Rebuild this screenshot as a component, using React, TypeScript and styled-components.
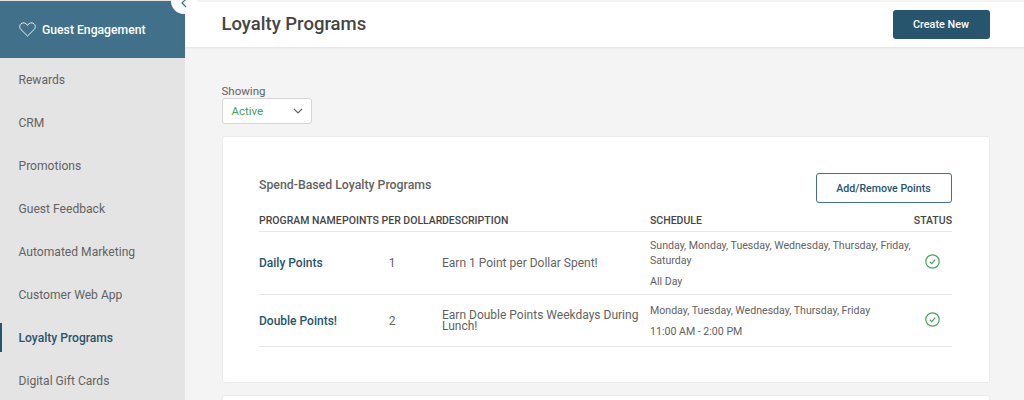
import { FunctionComponent } from "react";
import styled, { createGlobalStyle } from "styled-components";

const colors = {
  teal: "#41718a",
  navy: "#26556d",
  text: "#636363",
  dark: "#454545",
  green: "#4ba35f",
  line: "#e8e8e8",
};

const fontStack = `"Roboto", "Liberation Sans", sans-serif`;

const GlobalStyle = createGlobalStyle`
  html, body {
    margin: 0;
    height: 100%;
    overflow: hidden;
    background: #f4f4f4;
    font-family: ${fontStack};
    color: ${colors.text};
  }
  #root { height: 100%; }
`;

const Page = styled.div`
  position: relative;
  display: flex;
  width: 1024px;
  height: 400px;
  overflow: hidden;
`;

const Sidebar = styled.nav`
  flex: 0 0 185px;
  background: #e4e4e4;
  padding-top: 1px;
`;

const SideHeader = styled.div`
  display: flex;
  align-items: center;
  gap: 6px;
  height: 57px;
  padding-left: 19px;
  background: ${colors.teal};
  color: #fff;
  font-size: 12.2px;
  font-weight: 500;
`;

const SideItem = styled.div<{ $active?: boolean }>`
  position: relative;
  display: flex;
  align-items: center;
  height: 43px;
  padding-left: 18.5px;
  font-size: 12.1px;
  font-weight: ${({ $active }) => ($active ? 500 : 400)};
  color: ${({ $active }) => ($active ? colors.navy : colors.text)};

  &::before {
    content: "";
    display: ${({ $active }) => ($active ? "block" : "none")};
    position: absolute;
    left: 0;
    top: 7px;
    width: 2px;
    height: 29px;
    background: ${colors.navy};
  }
`;

const Collapse = styled.div`
  position: absolute;
  left: 171px;
  top: -12px;
  width: 26px;
  height: 26px;
  border-radius: 50%;
  background: #fff;
  display: flex;
  align-items: center;
  justify-content: center;
  padding-top: 4px;
  box-sizing: border-box;
`;

const Main = styled.main`
  flex: 1;
  min-width: 0;
`;

const TopBar = styled.header`
  display: flex;
  align-items: center;
  justify-content: space-between;
  box-sizing: border-box;
  height: 45px;
  margin-top: 2px;
  padding: 0 34.5px 0 36.5px;
  background: #fff;
  box-shadow: 0 1px 2px rgba(0, 0, 0, 0.08);
`;

const PageTitle = styled.h1`
  margin: 0 0 2px;
  font-size: 18.5px;
  font-weight: 500;
  color: ${colors.dark};
`;

const PrimaryButton = styled.button`
  width: 97px;
  height: 29px;
  border: 0;
  border-radius: 3px;
  background: ${colors.navy};
  color: #fff;
  font: 500 10.8px ${fontStack};
`;

const Content = styled.div`
  padding: 38px 34.5px 0 36.5px;
`;

const FieldLabel = styled.label`
  display: block;
  font-size: 11.5px;
  line-height: 13px;
  color: ${colors.text};
`;

const SelectBox = styled.div`
  display: flex;
  align-items: center;
  justify-content: space-between;
  box-sizing: border-box;
  width: 90px;
  height: 26px;
  padding: 0 8px 0 9px;
  background: #fff;
  border: 1px solid #d6d6d6;
  border-radius: 3px;
  font-size: 11.5px;
  color: ${colors.green};
`;

const Card = styled.section`
  box-sizing: border-box;
  margin-top: 12px;
  height: 247px;
  padding: 36px 37px 0 36.5px;
  background: #fff;
  border: 1px solid #ececec;
  border-radius: 3px;
`;

const CardHead = styled.div`
  display: flex;
  align-items: flex-start;
  justify-content: space-between;
  height: 36px;
`;

const CardTitle = styled.h2`
  margin: 5px 0 0;
  font-size: 12.3px;
  font-weight: 500;
  color: ${colors.text};
`;

const OutlineButton = styled.button`
  width: 136px;
  height: 30px;
  background: #fff;
  border: 1px solid ${colors.teal};
  border-radius: 3px;
  color: ${colors.navy};
  font: 500 10.6px ${fontStack};
`;

const Table = styled.table`
  width: 693px;
  table-layout: fixed;
  border-collapse: collapse;
`;

const Th = styled.th<{ $align?: string }>`
  height: 22px;
  padding: 0;
  font-size: 10.5px;
  font-weight: 500;
  white-space: nowrap;
  color: ${colors.dark};
  text-align: ${({ $align }) => $align || "left"};
  border-bottom: 1px solid ${colors.line};
`;

const Row = styled.tr<{ $height: number }>`
  height: ${({ $height }) => $height}px;
`;

const Td = styled.td<{ $align?: string }>`
  padding: 0;
  font-size: 12px;
  color: ${colors.text};
  text-align: ${({ $align }) => $align || "left"};
  border-bottom: 1px solid ${colors.line};
`;

const ProgramName = styled.a`
  font-size: 12px;
  font-weight: 500;
  white-space: nowrap;
  color: ${colors.navy};
`;

const Description = styled.div`
  line-height: 11px;
  font-size: 12px;
`;

const Days = styled.div`
  font-size: 10.6px;
  line-height: 15px;
`;

const Hours = styled.div`
  margin-top: 6px;
  font-size: 10.6px;
  line-height: 15px;
`;

const Heart: FunctionComponent = () => (
  <svg width="17" height="15" viewBox="0 0 17 15" fill="none" stroke="#fff" strokeWidth="0.9">
    <path d="M8.5 14 L1.8 7.4 C-0.2 5.2 0.6 1.2 4.2 0.9 C6 0.8 7.6 1.8 8.5 3.4 C9.4 1.8 11 0.8 12.8 0.9 C16.4 1.2 17.2 5.2 15.2 7.4 Z" />
  </svg>
);

const Chevron: FunctionComponent<{ color: string; width: number; height: number; points: string }> = ({ color, width, height, points }) => (
  <svg width={width} height={height} viewBox={`0 0 ${width} ${height}`} fill="none" stroke={color} strokeWidth="1.2">
    <polyline points={points} />
  </svg>
);

const StatusCheck: FunctionComponent = () => (
  <svg width="15" height="15" viewBox="0 0 15 15" fill="none" stroke={colors.green} strokeWidth="1.2">
    <circle cx="7.5" cy="7.5" r="6.7" />
    <polyline points="4.8,7.8 6.8,9.6 10.2,5.6" />
  </svg>
);

const navItems = [
  "Rewards",
  "CRM",
  "Promotions",
  "Guest Feedback",
  "Automated Marketing",
  "Customer Web App",
  "Loyalty Programs",
  "Digital Gift Cards",
];

export default function App() {
  return (
    <Page>
      <GlobalStyle />
      <Sidebar>
        <SideHeader>
          <Heart />
          Guest Engagement
        </SideHeader>
        {navItems.map((item) => (
          <SideItem key={item} $active={item === "Loyalty Programs"}>
            {item}
          </SideItem>
        ))}
      </Sidebar>
      <Collapse>
        <Chevron color={colors.teal} width={6} height={10} points="5,1 1,5 5,9" />
      </Collapse>
      <Main>
        <TopBar>
          <PageTitle>Loyalty Programs</PageTitle>
          <PrimaryButton>Create New</PrimaryButton>
        </TopBar>
        <Content>
          <FieldLabel>Showing</FieldLabel>
          <SelectBox>
            Active
            <Chevron color="#666" width={10} height={6} points="1,1 5,5 9,1" />
          </SelectBox>
          <Card>
            <CardHead>
              <CardTitle>Spend-Based Loyalty Programs</CardTitle>
              <OutlineButton>Add/Remove Points</OutlineButton>
            </CardHead>
            <Table>
              <colgroup>
                <col width="83" />
                <col width="100" />
                <col width="208" />
                <col width="263" />
                <col width="39" />
              </colgroup>
              <thead>
                <tr>
                  <Th>PROGRAM NAME</Th>
                  <Th>POINTS PER DOLLAR</Th>
                  <Th>DESCRIPTION</Th>
                  <Th>SCHEDULE</Th>
                  <Th $align="right">STATUS</Th>
                </tr>
              </thead>
              <tbody>
                <Row $height={63}>
                  <Td><ProgramName>Daily Points</ProgramName></Td>
                  <Td $align="center">1</Td>
                  <Td><Description>Earn 1 Point per Dollar Spent!</Description></Td>
                  <Td>
                    <Days>Sunday, Monday, Tuesday, Wednesday, Thursday, Friday, Saturday</Days>
                    <Hours>All Day</Hours>
                  </Td>
                  <Td $align="center"><StatusCheck /></Td>
                </Row>
                <Row $height={52}>
                  <Td><ProgramName>Double Points!</ProgramName></Td>
                  <Td $align="center">2</Td>
                  <Td><Description>Earn Double Points Weekdays During Lunch!</Description></Td>
                  <Td>
                    <Days>Monday, Tuesday, Wednesday, Thursday, Friday</Days>
                    <Hours>11:00 AM - 2:00 PM</Hours>
                  </Td>
                  <Td $align="center"><StatusCheck /></Td>
                </Row>
              </tbody>
            </Table>
          </Card>
          <Card />
        </Content>
      </Main>
    </Page>
  );
}
